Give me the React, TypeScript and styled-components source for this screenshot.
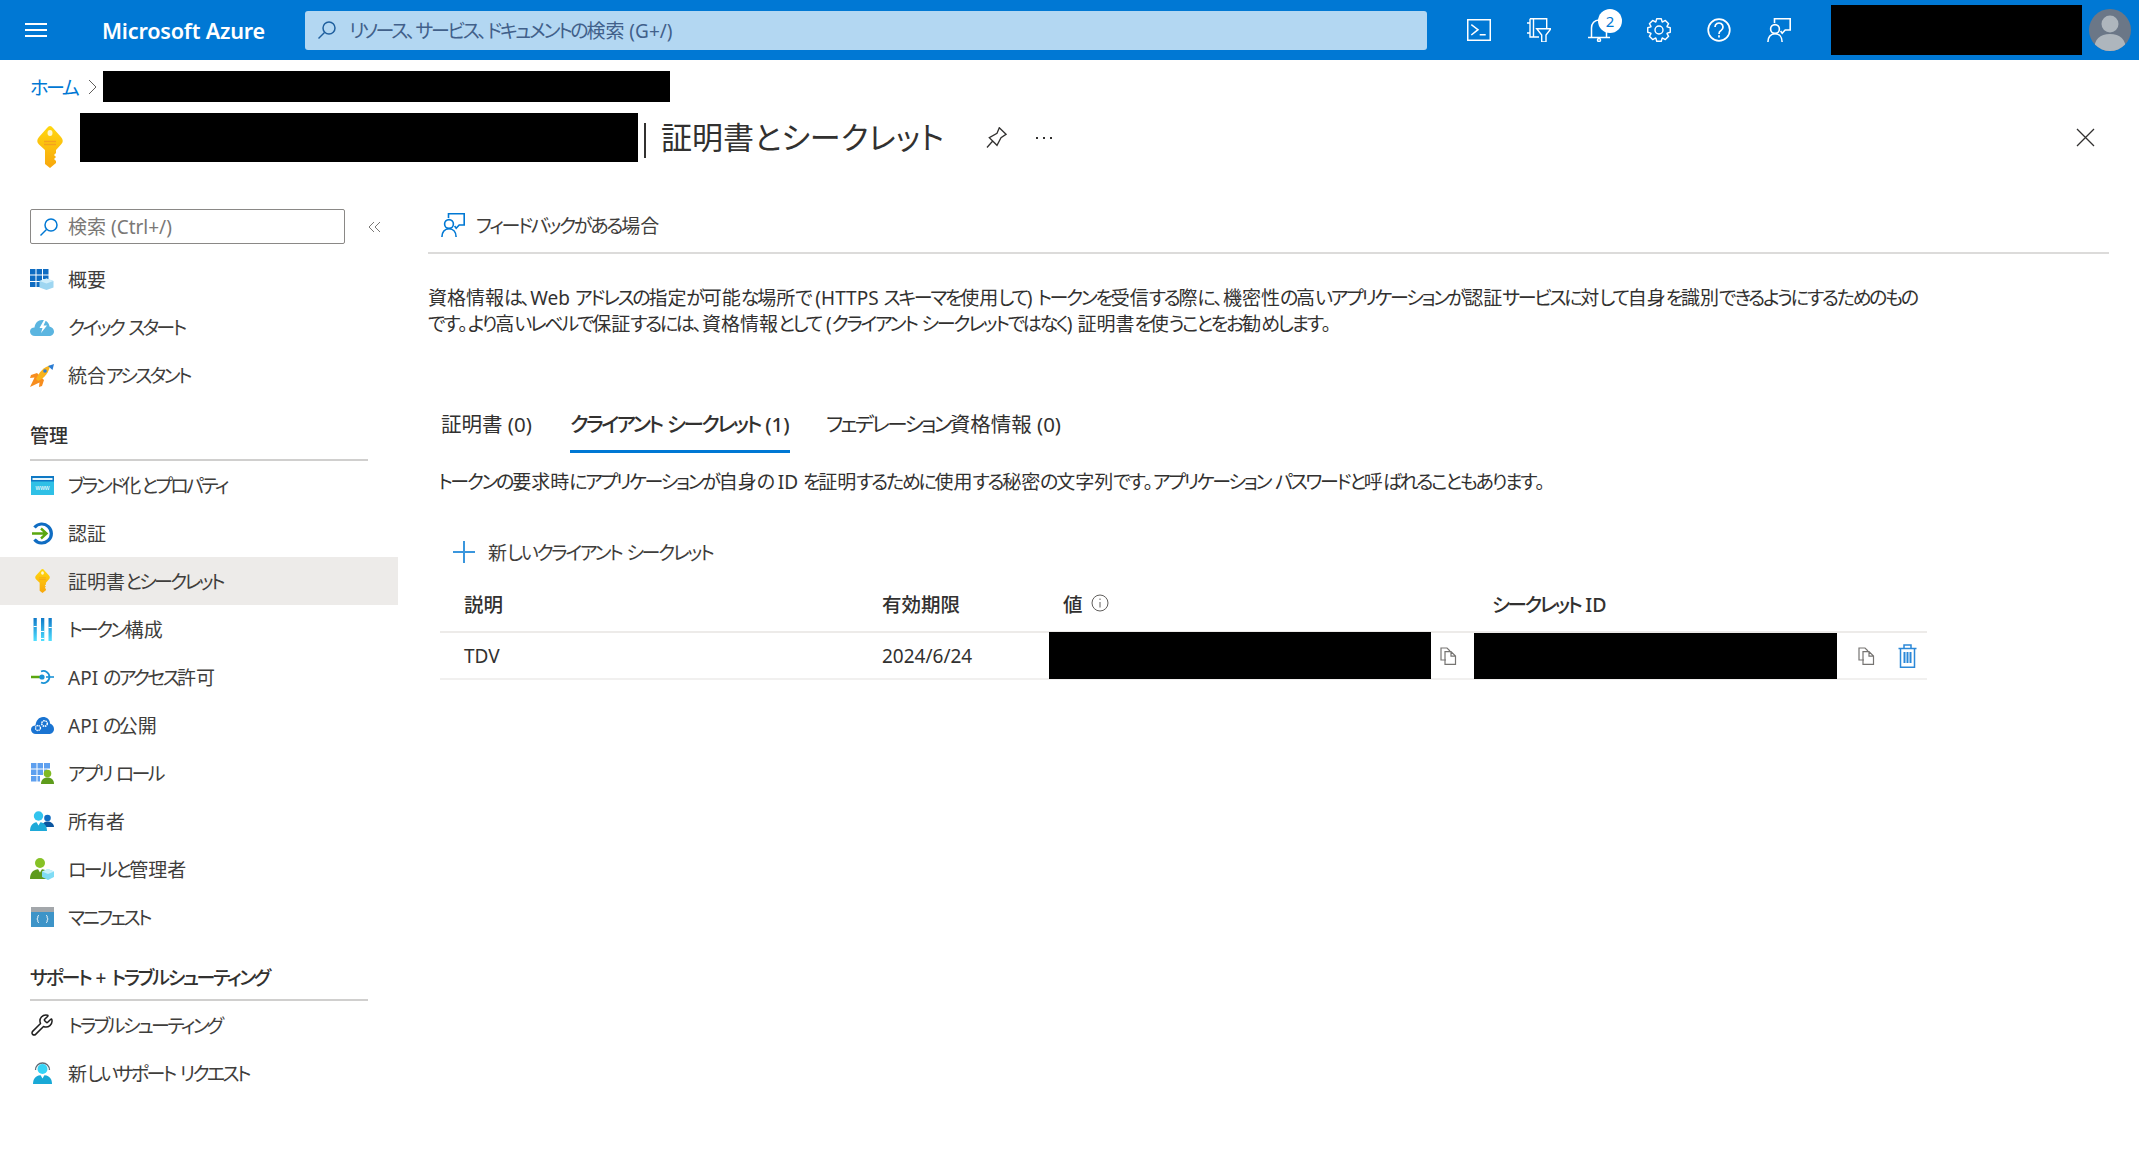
import React from "react";
import styled, { createGlobalStyle } from "styled-components";
import { Wrench } from "lucide-react";

const GlobalStyle = createGlobalStyle`
  html, body { margin: 0; padding: 0; background: #fff; }
  body {
    font-family: "Noto Sans", "Noto Sans CJK JP", sans-serif;
    font-feature-settings: "palt";
    color: #323130;
    font-size: 19px;
    overflow: hidden;
  }
`;

const Page = styled.div`
  width: 2139px;
  height: 1176px;
  display: flex;
  flex-direction: column;
  background: #fff;
`;

const TopBar = styled.header`
  height: 60px;
  flex: none;
  background: #0078d4;
  display: flex;
  align-items: center;
  color: #fff;
`;

const Hamburger = styled.button`
  width: 22px;
  height: 14px;
  margin-left: 25px;
  padding: 0;
  border: 0;
  border-top: 2px solid #fff;
  border-bottom: 2px solid #fff;
  background: linear-gradient(#fff, #fff) center / 100% 2px no-repeat;
`;

const Brand = styled.div`
  margin-left: 55px;
  width: 203px;
  font-size: 21.6px;
  font-weight: 600;
  letter-spacing: -0.2px;
  white-space: nowrap;
`;

const GlobalSearch = styled.div`
  width: 1122px;
  height: 39px;
  border-radius: 3px;
  background: #b3d7f2;
  display: flex;
  align-items: center;
  gap: 12px;
  padding-left: 12px;
  box-sizing: border-box;
  color: #41608a;
  font-size: 19px;
`;

const TopIcons = styled.div`
  margin-left: 22px;
  display: flex;
`;

const TopIcon = styled.div`
  position: relative;
  width: 60px;
  height: 60px;
  display: flex;
  align-items: center;
  justify-content: center;
`;

const Badge = styled.span`
  position: absolute;
  top: 9px;
  right: 7px;
  width: 24px;
  height: 24px;
  border-radius: 50%;
  background: #fff;
  color: #0078d4;
  font-size: 15px;
  line-height: 24px;
  text-align: center;
`;

const Redacted = styled.div<{ $w: number; $h: number }>`
  width: ${(p) => p.$w}px;
  height: ${(p) => p.$h}px;
  flex: none;
  background: #000;
`;

const Account = styled.div`
  margin-left: 22px;
  display: flex;
  align-items: center;
  gap: 7px;
`;

const Avatar = styled.div`
  width: 42px;
  height: 42px;
  border-radius: 50%;
  overflow: hidden;
  background: #6b7787;
`;

const Crumbs = styled.nav`
  flex: none;
  margin-top: 11px;
  padding-left: 30px;
  height: 31px;
  display: flex;
  align-items: center;
`;

const CrumbLink = styled.a`
  color: #0078d4;
  font-size: 19px;
  width: 59px;
  white-space: nowrap;
`;

const CrumbChevron = styled.svg`
  width: 9px;
  height: 16px;
  margin-right: 6px;
  margin-left: -1px;
`;

const TitleRow = styled.div`
  flex: none;
  margin-top: 11px;
  height: 49px;
  display: flex;
  align-items: center;
  padding-left: 37px;
`;

const TitleKey = styled.div`
  width: 26px;
  height: 42px;
  margin-top: 18px;
  margin-right: 17px;
`;

const TitleSep = styled.div`
  width: 2px;
  height: 35px;
  margin: 6px 15px 0 6px;
  background: #323130;
`;

const Title = styled.h1`
  margin: 0;
  padding-bottom: 4px;
  font-size: 31px;
  font-weight: 400;
  white-space: nowrap;
  width: 312px;
`;

const TitleAction = styled.div`
  width: 47px;
  display: flex;
  justify-content: center;
  color: #323130;
`;

const Dots = styled.div`
  display: flex;
  gap: 5px;
  span {
    width: 2px;
    height: 2px;
    background: #323130;
  }
`;

const CloseBtn = styled.svg`
  width: 19px;
  height: 19px;
  margin-left: auto;
  margin-right: 44px;
`;

const Body = styled.div`
  flex: 1;
  display: flex;
`;

const Sidebar = styled.aside`
  width: 398px;
  flex: none;
  padding-top: 47px;
`;

const SideTop = styled.div`
  display: flex;
  align-items: center;
  margin: 0 0 11px 30px;
`;

const SideSearch = styled.div`
  width: 315px;
  height: 35px;
  box-sizing: border-box;
  border: 1px solid #8a8886;
  border-radius: 2px;
  display: flex;
  align-items: center;
  gap: 9px;
  padding-left: 8px;
  color: #7a7876;
  font-size: 19px;
`;

const SideSearchText = styled.span`
  padding-bottom: 2px;
`;

const Collapse = styled.svg`
  width: 13px;
  height: 12px;
  margin-left: 23px;
`;

const NavRow = styled.div<{ $active?: boolean }>`
  --kana: -0.14em;
  height: 48px;
  display: flex;
  align-items: center;
  padding-left: 30px;
  background: ${(p) => (p.$active ? "#edebe9" : "transparent")};
  font-size: 19px;
  color: #3f3e3c;
  white-space: nowrap;
`;

const NavIcon = styled.div`
  width: 24px;
  height: 24px;
  margin-right: 14px;
  flex: none;
  display: flex;
  align-items: center;
  justify-content: center;
`;

const NavHeading = styled.div<{ $h: number }>`
  height: ${(p) => p.$h}px;
  box-sizing: border-box;
  margin: 0 30px;
  border-bottom: 2px solid #d0cfce;
  display: flex;
  align-items: flex-start;
  padding-top: 25px;
  font-size: 19px;
  font-weight: 500;
  line-height: 24px;
  white-space: nowrap;
`;

const Main = styled.main`
  margin-left: 30px;
  width: 1681px;
`;

const FeedbackBar = styled.div`
  margin-top: 47px;
  height: 45px;
  box-sizing: border-box;
  border-bottom: 2px solid #dcdbda;
  padding: 4px 0 0 13px;
  display: flex;
  align-items: flex-start;
  gap: 11px;
  font-size: 19px;
  line-height: 26px;
  color: #3f3e3c;
`;

const Description = styled.p`
  margin: 31px 0 0;
  font-size: 19px;
  line-height: 26px;
  width: 1500px;
  white-space: nowrap;
`;

const Tabs = styled.div`
  margin: 62px 0 0 13px;
  height: 51px;
  display: flex;
`;

const Tab = styled.div<{ $active?: boolean; $w: number }>`
  width: ${(p) => p.$w}px;
  height: 51px;
  box-sizing: border-box;
  padding-top: 12px;
  line-height: 26px;
  font-size: 20.5px;
  font-weight: ${(p) => (p.$active ? 500 : 400)};
  white-space: nowrap;
`;

const ActiveLabel = styled.span`
  display: block;
  width: 220px;
  height: 39px;
  border-bottom: 3px solid #0078d4;
`;

const Hint = styled.p`
  margin: 19px 0 0 10px;
  font-size: 19px;
  line-height: 26px;
  white-space: nowrap;
`;

const AddButton = styled.div`
  margin: 38px 0 0 25px;
  height: 38px;
  display: flex;
  align-items: center;
  gap: 13px;
  font-size: 19px;
  color: #3f3e3c;
`;

const Table = styled.div`
  margin: 4px 0 0 12px;
  width: 1487px;
  display: grid;
  grid-template-columns: 442px 167px 425px 453px;
`;

const HeadCell = styled.div<{ $pad: number }>`
  height: 58px;
  box-sizing: border-box;
  padding-left: ${(p) => p.$pad}px;
  display: flex;
  align-items: center;
  gap: 8px;
  font-size: 19.5px;
  font-weight: 500;
  border-bottom: 2px solid #edebe9;
`;

const Cell = styled.div<{ $pad?: number }>`
  height: 47px;
  box-sizing: border-box;
  padding-left: ${(p) => p.$pad ?? 0}px;
  display: flex;
  align-items: center;
  font-size: 19px;
  border-bottom: 2px solid #f1f0ef;
`;

const IconButton = styled.div<{ $left: number }>`
  margin-left: ${(p) => p.$left}px;
  display: flex;
`;

const KanaRun = styled.span`
  letter-spacing: var(--kana, -0.12em);
`;

// kana sits much tighter than kanji in the reference's UI font
const Jp = ({ text }: { text: string }) => (
  <>
    {text.split(/([\u3040-\u30ff]+)/).map((part, i) =>
      i % 2 === 1 ? <KanaRun key={i}>{part}</KanaRun> : part
    )}
  </>
);

const cogPath = (() => {
  const pts: string[] = [];
  for (let i = 0; i < 8; i++) {
    const a = (i * Math.PI) / 4;
    [
      [a - 0.36, 8.8],
      [a - 0.2, 11.5],
      [a + 0.2, 11.5],
      [a + 0.36, 8.8],
    ].forEach(([t, r]) => {
      pts.push(`${(12 + r * Math.sin(t)).toFixed(2)} ${(12 - r * Math.cos(t)).toFixed(2)}`);
    });
  }
  return `M${pts.join("L")}Z`;
})();

const SearchGlyph = ({ color, size = 20 }: { color: string; size?: number }) => (
  <svg width={size} height={size} viewBox="0 0 20 20" fill="none" stroke={color} strokeWidth="1.5">
    <circle cx="12" cy="8" r="6" />
    <path d="M7.5 12.5 1.5 18.5" />
  </svg>
);

const FeedbackGlyph = ({ color }: { color: string }) => (
  <svg width="24" height="24" viewBox="0 0 24 24" fill="none" stroke={color} strokeWidth="1.6">
    <path d="M7.5 5V.8h15.7V12h-5l-3 3.3-1.6-2.3" />
    <circle cx="8" cy="11" r="4.4" />
    <path d="M.9 24c0-5 2.800-8.300 7.100-8.300s7.100 3.300 7.100 8.300" />
  </svg>
);

const KeyGlyph = ({ w, h }: { w: number; h: number }) => (
  <svg width={w} height={h} viewBox="0 0 26 42">
    <defs>
      <linearGradient id="keyFill" x1="0" y1="0" x2="0" y2="1">
        <stop offset="0" stopColor="#ffd70f" />
        <stop offset="1" stopColor="#f8a70d" />
      </linearGradient>
    </defs>
    <path
      fill="url(#keyFill)"
      d="M13 0q1.500 0 3 2l8 9q3.500 4 0 7.500L19 24v3l-2 2 2 2-2 2 2 2v2l-6 5-5-4V24l-6-5.500Q-1.500 15 2 11l8-9q1.500-2 3-2z"
    />
    <ellipse cx="13" cy="7" rx="2.500" ry="3" fill="#fff7cf" />
    <path d="M7 15.500h12M7 18.500h12" stroke="#f4a21d" strokeWidth="1.300" />
  </svg>
);

const CopyGlyph = () => (
  <svg width="17" height="18" viewBox="0 0 17 18" fill="none" stroke="#767472" strokeWidth="1.200">
    <path d="M6 13H1V1h6l3 3" />
    <path d="M5 4.600h6l4.500 4.500v8.300H5zM11 4.600v4.500h4.500" />
  </svg>
);

const TrashGlyph = () => (
  <svg width="19" height="24" viewBox="0 0 19 24" fill="none" stroke="#2b88d8" strokeWidth="1.500">
    <path d="M.5 4.500h18M6 4.500V1h7v3.500M2.500 4.500v18.700h14V4.500" />
    <path d="M6.500 8v11M9.500 8v11M12.500 8v11" strokeWidth="2" />
  </svg>
);

const Icons: Record<string, React.ReactNode> = {
  overview: (
    <svg width="24" height="21" viewBox="0 0 24 21">
      <path
        fill="#0f6cc2"
        d="M0 0h5.500v5.500H0zM6.500 0h5.500v5.500H6.500zM13 0h5.500v5.500H13zM0 6.500h5.500V12H0zM6.500 6.500h5.500V12H6.500zM13 6.500h5.500V10H13zM0 13h5.500v5H0zM6.500 13h3.500v5H6.500z"
      />
      <path fill="#9ed6f1" d="M16.500 9.500 23.500 12v6.500l-7 2.500-7-2.500V12z" />
      <path fill="#cfeefb" d="M16.500 9.500 23.500 12l-7 2.500-7-2.500z" />
    </svg>
  ),
  cloudBolt: (
    <svg width="24" height="17" viewBox="0 0 24 17">
      <path
        fill="#5bb5e0"
        d="M5 17C2 17 0 15 0 12.500S2 8.500 4.500 8.500C5 4 8 1 12 1s7 2.500 7.500 6.500C22 8 24 10 24 12.500S22 17 19 17z"
      />
      <path fill="#fff" d="M14.500 0 9.500 9h3l-1.500 5 6-7.500h-3.500L16 1z" />
    </svg>
  ),
  rocket: (
    <svg width="24" height="23" viewBox="0 0 24 23">
      <path fill="#f78d1e" d="M7 9 1 11l-1 3 4.500-.5L0 23l9.500-4.500L9 23l3-1 2-6z" />
      <path fill="#f8b31c" d="M8 17 6 15C9 8 14 3 20 1.500 19 8 15 14 8 17z" />
      <path fill="#2b7cd3" d="M18 2 24 0l-1.500 6z" />
      <circle cx="15" cy="7" r="1.800" fill="#2b7cd3" />
    </svg>
  ),
  www: (
    <svg width="23" height="19" viewBox="0 0 23 19">
      <rect width="23" height="19" fill="#2fc0e6" />
      <rect width="23" height="5.500" fill="#0e78c4" />
      <rect x="1.500" y="2" width="20" height="2" fill="#e8f6fc" />
      <text x="11.500" y="14" textAnchor="middle" fontSize="6.500" fill="#fff" fontFamily="Liberation Sans">
        www
      </text>
    </svg>
  ),
  auth: (
    <svg width="23" height="23" viewBox="0 0 23 23" fill="none">
      <path d="M3.500 5.500A9.500 9.500 0 1 1 3.500 17.500" stroke="#0f6cc2" strokeWidth="3.200" />
      <path d="M1 11.500h14M10 6.500l5.500 5-5.500 5" stroke="#5aa70f" strokeWidth="2.400" />
    </svg>
  ),
  key: <KeyGlyph w={15} h={24} />,
  token: (
    <svg width="19" height="23" viewBox="0 0 19 23">
      <defs>
        <linearGradient id="tokenBar" x1="0" y1="0" x2="0" y2="1">
          <stop offset="0" stopColor="#0f78c8" />
          <stop offset="1" stopColor="#50e0ff" />
        </linearGradient>
      </defs>
      <path fill="url(#tokenBar)" d="M.5 0h3.300v23H.5zM8 0h3.300v23H8zM15.500 0h3.300v23h-3.300z" />
      <path fill="#fff" d="M.5 8h3.300v1H.5zM8 13h3.300v1H8zM15.500 9h3.300v1h-3.300zM8 20h3.300v1H8z" />
    </svg>
  ),
  apiAccess: (
    <svg width="23" height="14" viewBox="0 0 23 14" fill="none">
      <path d="M0 7h11" stroke="#5aa70f" strokeWidth="2.500" />
      <path d="M15 7h8" stroke="#1b93d6" strokeWidth="1.600" />
      <path d="M10 1.500a6 6 0 1 1 0 11" stroke="#1b93d6" strokeWidth="1.800" />
      <circle cx="11" cy="7" r="2.600" fill="#1b93d6" />
    </svg>
  ),
  apiCloud: (
    <svg width="23" height="17" viewBox="0 0 23 17">
      <path
        fill="#1a74d2"
        d="M5 17C2 17 0 15 0 12.500S2 8.500 4.500 8.500C5 3.500 8 0 12 0s7 2.500 7 6.500c2 .5 4 2.800 4 5.500s-2 5-5 5z"
      />
      <circle cx="7" cy="11" r="2.500" fill="none" stroke="#fff" strokeWidth="1.300" strokeDasharray="1.400 .6" />
      <circle cx="13.500" cy="6.500" r="2.800" fill="none" stroke="#fff" strokeWidth="1.500" strokeDasharray="1.600 .7" />
    </svg>
  ),
  appRole: (
    <svg width="23" height="21" viewBox="0 0 23 21">
      <path
        fill="#5ea0ef"
        d="M0 0h5.500v5.500H0zM6.500 0H12v5.500H6.500zM13 0h6v5.500h-6zM0 6.500h5.500V12H0zM6.500 6.500H12V12H6.500zM13 6.500h3V9h-3zM0 13h5.500v5.500H0zM6.500 13h2.500v5.500H6.500z"
      />
      <circle cx="16.500" cy="10.500" r="3.800" fill="#7fba22" />
      <path fill="#5e9c1c" d="M10 21c0-4 2.500-6.500 6.500-6.500S23 17 23 21z" />
    </svg>
  ),
  owners: (
    <svg width="24" height="20" viewBox="0 0 24 20">
      <circle cx="17.500" cy="7" r="3.300" fill="#0f6cc2" />
      <path fill="#0b559f" d="M12 16c0-3.500 2.500-5.500 5.500-5.500S24 12.500 24 16z" />
      <circle cx="8.500" cy="5" r="4.700" fill="#32c4ee" />
      <path fill="#1ea9d8" d="M0 20c0-6 3.500-9 8.500-9s8.500 3 8.500 9z" />
      <path fill="#fff" d="M6.500 11l2 3.500 2-3.500z" />
    </svg>
  ),
  admins: (
    <svg width="24" height="22" viewBox="0 0 24 22">
      <circle cx="10" cy="5" r="5" fill="#86c226" />
      <path fill="#5d9a1e" d="M0 21c0-6.500 3.500-10 10-10s10 3.500 10 10z" />
      <path fill="#fff" d="M8 11l2 3.500 2-3.500z" />
      <path fill="#7fdcf5" d="M18 11l6 2.500V19l-6 3-6-3v-5.500z" />
      <path fill="#c8f1fb" d="M18 11l6 2.500-6 2.500-6-2.500z" />
    </svg>
  ),
  manifest: (
    <svg width="23" height="20" viewBox="0 0 23 20">
      <rect width="23" height="20" fill="#3d94c8" />
      <rect width="23" height="5" fill="#a3a7ab" />
      <path
        d="M8 8.500c-1 0-1.200.4-1.200 1.500s0 1.500-1 2c1 .4 1 1 1 2s.2 1.500 1.200 1.500M15 8.500c1 0 1.200.4 1.200 1.500s0 1.500 1 2c-1 .4-1 1-1 2s-.2 1.500-1.200 1.500"
        stroke="#fff"
        fill="none"
      />
    </svg>
  ),
  wrench: <Wrench size={24} strokeWidth={1.5} color="#1f1f1f" />,
  support: (
    <svg width="19" height="22" viewBox="0 0 19 22">
      <path d="M2.500 8a7 7 0 0 1 14 0" fill="none" stroke="#5f6b76" strokeWidth="1.300" />
      <circle cx="9.500" cy="7" r="5" fill="#35d4f7" />
      <path fill="#19a9d6" d="M0 22c0-6 3.500-9 9.500-9s9.500 3 9.500 9z" />
      <path fill="#fff" d="M7.500 13l2 3.500 2-3.500z" />
    </svg>
  ),
};

const first = [
  { icon: "overview", label: "概要" },
  { icon: "cloudBolt", label: "クイック スタート" },
  { icon: "rocket", label: "統合アシスタント" },
];

const manage = [
  { icon: "www", label: "ブランド化とプロパティ" },
  { icon: "auth", label: "認証" },
  { icon: "key", label: "証明書とシークレット", active: true },
  { icon: "token", label: "トークン構成" },
  { icon: "apiAccess", label: "API のアクセス許可" },
  { icon: "apiCloud", label: "API の公開" },
  { icon: "appRole", label: "アプリ ロール" },
  { icon: "owners", label: "所有者" },
  { icon: "admins", label: "ロールと管理者" },
  { icon: "manifest", label: "マニフェスト" },
];

const support = [
  { icon: "wrench", label: "トラブルシューティング" },
  { icon: "support", label: "新しいサポート リクエスト" },
];

type Item = { icon: string; label: string; active?: boolean };

const NavItems = ({ items }: { items: Item[] }) => (
  <>
    {items.map((it) => (
      <NavRow key={it.label} $active={it.active}>
        <NavIcon>{Icons[it.icon]}</NavIcon>
        <span>
          <Jp text={it.label} />
        </span>
      </NavRow>
    ))}
  </>
);

export default function App() {
  return (
    <Page>
      <GlobalStyle />
      <TopBar>
        <Hamburger aria-label="menu" />
        <Brand>Microsoft Azure</Brand>
        <GlobalSearch>
          <SearchGlyph color="#1f5f9e" />
          <span>
            <Jp text="リソース、サービス、ドキュメントの検索 (G+/)" />
          </span>
        </GlobalSearch>
        <TopIcons>
          <TopIcon>
            <svg width="24" height="22" viewBox="0 0 24 22" fill="none" stroke="#fff" strokeWidth="1.500">
              <rect x=".75" y=".75" width="22.500" height="20.500" />
              <path d="M4.300 5.700 11 10.700 4.300 16M12.700 15.700h6" />
            </svg>
          </TopIcon>
          <TopIcon>
            <svg width="24" height="24" viewBox="0 0 24 24" fill="none" stroke="#fff" strokeWidth="1.400">
              <path d="M6.500 .7V19M3 .7h16.700V10M3 .7V19h9M0 5h3.500M0 15h3.500" />
              <path d="M9.700 10.700H24L19 17v7h-4.300v-7z" />
            </svg>
          </TopIcon>
          <TopIcon>
            <svg width="22" height="24" viewBox="0 0 22 24" fill="none" stroke="#fff" strokeWidth="1.500">
              <path d="M3.500 19.500V10c0-4.500 3-8 7.500-8s7.500 3.500 7.500 8v9.500M0 19.500h22" />
              <circle cx="11" cy="22" r="1.500" />
            </svg>
            <Badge>2</Badge>
          </TopIcon>
          <TopIcon>
            <svg width="24" height="24" viewBox="0 0 24 24" fill="none" stroke="#fff" strokeWidth="1.400" strokeLinejoin="round">
              <path d={cogPath} />
              <circle cx="12" cy="12" r="4" />
            </svg>
          </TopIcon>
          <TopIcon>
            <svg width="24" height="24" viewBox="0 0 24 24" fill="none" stroke="#fff" strokeWidth="1.700">
              <circle cx="12" cy="12" r="10.800" />
              <path d="M8 9a4 4 0 1 1 6 3.500c-1.500.8-2 1.500-2 3.500" />
              <path d="M12 17.300v2.200" />
            </svg>
          </TopIcon>
          <TopIcon>
            <FeedbackGlyph color="#fff" />
          </TopIcon>
        </TopIcons>
        <Account>
          <Redacted $w={251} $h={50} />
          <Avatar>
            <svg width="42" height="42" viewBox="0 0 42 42">
              <circle cx="21" cy="15" r="8.500" fill="#aeb6bd" />
              <path fill="#aeb6bd" d="M5 42c0-12 6-17 16-17s16 5 16 17z" />
            </svg>
          </Avatar>
        </Account>
      </TopBar>

      <Crumbs>
        <CrumbLink>
          <Jp text="ホーム" />
        </CrumbLink>
        <CrumbChevron viewBox="0 0 9 16" fill="none" stroke="#605e5c" strokeWidth="1">
          <path d="M1 1l7 7-7 7" />
        </CrumbChevron>
        <Redacted $w={567} $h={31} />
      </Crumbs>

      <TitleRow>
        <TitleKey>
          <KeyGlyph w={26} h={42} />
        </TitleKey>
        <Redacted $w={558} $h={49} />
        <TitleSep />
        <Title>証明書とシークレット</Title>
        <TitleAction>
          <svg width="21" height="21" viewBox="0 0 21 21" fill="none" stroke="#323130" strokeWidth="1.300">
            <path d="M13.300.7 20 7.300 15 10.700 11 18.300 3.300 10.700 11 6.300zM1 20.500 6.700 14" />
          </svg>
        </TitleAction>
        <TitleAction>
          <Dots>
            <span />
            <span />
            <span />
          </Dots>
        </TitleAction>
        <CloseBtn viewBox="0 0 19 19" stroke="#323130" strokeWidth="1.300">
          <path d="M1 1l17 17M18 1L1 18" />
        </CloseBtn>
      </TitleRow>

      <Body>
        <Sidebar>
          <SideTop>
            <SideSearch>
              <SearchGlyph color="#0078d4" size={20} />
              <SideSearchText>検索 (Ctrl+/)</SideSearchText>
            </SideSearch>
            <Collapse viewBox="0 0 13 12" fill="none" stroke="#7a7876">
              <path d="M6 1 1 6l5 5M12 1 7 6l5 5" />
            </Collapse>
          </SideTop>
          <NavItems items={first} />
          <NavHeading $h={62}>管理</NavHeading>
          <NavItems items={manage} />
          <NavHeading $h={60}>
            <span>
              <Jp text="サポート + トラブルシューティング" />
            </span>
          </NavHeading>
          <NavItems items={support} />
        </Sidebar>

        <Main>
          <FeedbackBar>
            <FeedbackGlyph color="#0078d4" />
            <span>
              <Jp text="フィードバックがある場合" />
            </span>
          </FeedbackBar>
          <Description>
            <Jp text="資格情報は、Web アドレスの指定が可能な場所で (HTTPS スキーマを使用して) トークンを受信する際に、機密性の高いアプリケーションが認証サービスに対して自身を識別できるようにするためのもの" />
            <br />
            <Jp text="です。より高いレベルで保証するには、資格情報として (クライアント シークレットではなく) 証明書を使うことをお勧めします。" />
          </Description>
          <Tabs>
            <Tab $w={129}>証明書 (0)</Tab>
            <Tab $w={256} $active>
              <ActiveLabel>
                <Jp text="クライアント シークレット (1)" />
              </ActiveLabel>
            </Tab>
            <Tab $w={240}>
              <Jp text="フェデレーション資格情報 (0)" />
            </Tab>
          </Tabs>
          <Hint>
            <Jp text="トークンの要求時にアプリケーションが自身の ID を証明するために使用する秘密の文字列です。アプリケーション パスワードと呼ばれることもあります。" />
          </Hint>
          <AddButton>
            <svg width="22" height="22" viewBox="0 0 22 22" stroke="#3a96dd" strokeWidth="2">
              <path d="M11 0v22M0 11h22" />
            </svg>
            <span>
              <Jp text="新しいクライアント シークレット" />
            </span>
          </AddButton>
          <Table>
            <HeadCell $pad={24}>説明</HeadCell>
            <HeadCell $pad={0}>有効期限</HeadCell>
            <HeadCell $pad={14}>
              値
              <svg width="18" height="18" viewBox="0 0 18 18" fill="none" stroke="#605e5c">
                <circle cx="9" cy="9" r="8" />
                <path d="M9 8v5.500M9 4.500v1.500" />
              </svg>
            </HeadCell>
            <HeadCell $pad={18}>
              <span>
                <Jp text="シークレット ID" />
              </span>
            </HeadCell>
            <Cell $pad={24}>TDV</Cell>
            <Cell>2024/6/24</Cell>
            <Cell>
              <Redacted $w={382} $h={47} />
              <IconButton $left={9}>
                <CopyGlyph />
              </IconButton>
            </Cell>
            <Cell>
              <Redacted $w={363} $h={46} />
              <IconButton $left={21}>
                <CopyGlyph />
              </IconButton>
              <IconButton $left={23}>
                <TrashGlyph />
              </IconButton>
            </Cell>
          </Table>
        </Main>
      </Body>
    </Page>
  );
}
